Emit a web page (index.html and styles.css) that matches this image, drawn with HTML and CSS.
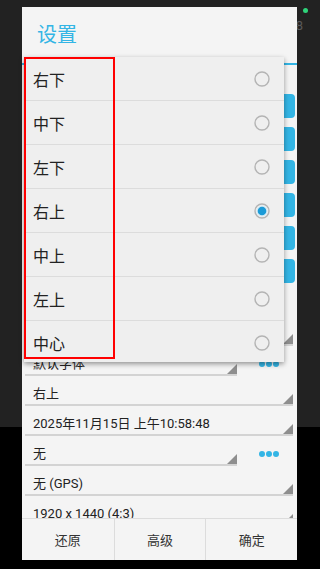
FILE: index.html
```html
<!DOCTYPE html>
<html lang="zh-CN">
<head>
    <meta charset="UTF-8">
    <meta name="viewport" content="width=device-width, initial-scale=1.0">
    <title>设置</title>
    <link rel="stylesheet" href="styles.css">
</head>
<body>
    <div class="backdrop">
        <span class="dot"></span>
        <span class="clock">10:58</span>
    </div>

    <div class="dialog">
        <h1 class="title">设置</h1>

        <div class="content">
            <div class="btn-row"><span>水印样式</span><button class="blue-btn">设置</button></div>
            <div class="btn-row"><span>文字颜色</span><button class="blue-btn">设置</button></div>
            <div class="btn-row"><span>背景颜色</span><button class="blue-btn">设置</button></div>
            <div class="btn-row"><span>文字大小</span><button class="blue-btn">设置</button></div>
            <div class="btn-row"><span>边距</span><button class="blue-btn">设置</button></div>
            <div class="btn-row"><span>透明度</span><button class="blue-btn">设置</button></div>
            <div class="label-row">字体</div>

            <div class="spinner-row">
                <div class="spinner">系统字体</div>
            </div>
            <div class="spinner-row">
                <div class="spinner narrow">默认字体</div>
                <div class="more"><i></i><i></i><i></i></div>
            </div>
            <div class="spinner-row">
                <div class="spinner">右上</div>
            </div>
            <div class="spinner-row">
                <div class="spinner">2025年11月15日 上午10:58:48</div>
            </div>
            <div class="spinner-row">
                <div class="spinner narrow">无</div>
                <div class="more"><i></i><i></i><i></i></div>
            </div>
            <div class="spinner-row">
                <div class="spinner">无 (GPS)</div>
            </div>
            <div class="spinner-row">
                <div class="spinner">1920 x 1440 (4:3)</div>
            </div>
        </div>

        <div class="actions">
            <button>还原</button>
            <button>高级</button>
            <button>确定</button>
        </div>

        <!-- dropdown list of the position spinner -->
        <ul class="popup">
            <li>右下 <svg class="radio" viewBox="0 0 16 16"><circle cx="8" cy="8" r="7" /></svg></li>
            <li>中下 <svg class="radio" viewBox="0 0 16 16"><circle cx="8" cy="8" r="7" /></svg></li>
            <li>左下 <svg class="radio" viewBox="0 0 16 16"><circle cx="8" cy="8" r="7" /></svg></li>
            <li>右上 <svg class="radio checked" viewBox="0 0 16 16"><circle cx="8" cy="8" r="7" /><circle class="halo" cx="8" cy="8" r="5.6" /><circle class="fill" cx="8" cy="8" r="4.3" /></svg></li>
            <li>中上 <svg class="radio" viewBox="0 0 16 16"><circle cx="8" cy="8" r="7" /></svg></li>
            <li>左上 <svg class="radio" viewBox="0 0 16 16"><circle cx="8" cy="8" r="7" /></svg></li>
            <li>中心 <svg class="radio" viewBox="0 0 16 16"><circle cx="8" cy="8" r="7" /></svg></li>
        </ul>

        <div class="mark"></div>
    </div>
</body>
</html>
```

FILE: styles.css
```css
* {
    box-sizing: border-box;
}
body {
    margin: 0;
    width: 320px;
    height: 569px;
    overflow: hidden;
    position: relative;
    background: #000;
    font-family: Roboto, "Noto Sans CJK SC", sans-serif;
}
.backdrop {
    height: 427px;
    background: #222;
    display: flex;
    flex-direction: column;
    align-items: flex-end;
    padding: 8px 12px 0 0;
}
.dot {
    width: 5px;
    height: 5px;
    border-radius: 50%;
    background: #2fd37a;
}
.clock {
    margin: 5px 5px 0 0;
    font-size: 13px;
    line-height: 15px;
    color: #5a5a5a;
}

.dialog {
    position: absolute;
    left: 22px;
    top: 7px;
    width: 275px;
    height: 553px;
    background: #f4f4f4;
    display: flex;
    flex-direction: column;
}
.title {
    margin: 0;
    height: 58px;
    padding-left: 15px;
    font-size: 20px;
    font-weight: normal;
    line-height: 56px;
    color: #33b5e5;
    border-bottom: 2px solid #33b5e5;
}
.content {
    flex: 1;
    overflow: hidden;
    padding: 24px 4px 0 3px;
    font-size: 13px;
    color: #222;
}
.btn-row {
    height: 33px;
    display: flex;
    align-items: center;
    justify-content: space-between;
    padding-left: 8px;
}
.blue-btn {
    width: 64px;
    height: 24px;
    margin-right: -2px;
    border: none;
    border-radius: 4px;
    background: #33b5e5;
    color: #fff;
    font-size: 12px;
}
.label-row {
    height: 29px;
    padding: 8px 0 0 8px;
}
.spinner-row {
    height: 30px;
    display: flex;
}
.spinner {
    position: relative;
    flex: 1;
    padding: 10px 0 2px 8px;
    line-height: 16px;
    border-bottom: 2px solid #d3d3d3;
    white-space: nowrap;
}
.spinner.narrow {
    flex: none;
    width: 212px;
}
.spinner::after {
    content: "";
    position: absolute;
    right: 0;
    bottom: 0;
    border-left: 10px solid transparent;
    border-bottom: 10px solid #8e8e8e;
}
.more {
    align-self: flex-end;
    margin: 0 0 9px 22px;
    display: flex;
    gap: 1px;
}
.more i {
    width: 6px;
    height: 6px;
    border-radius: 50%;
    background: #33b5e5;
}

.actions {
    height: 42px;
    display: grid;
    grid-template-columns: 1fr 1fr 1fr;
    border-top: 1px solid #dcdcdc;
}
.actions button {
    border: none;
    background: none;
    font-family: inherit;
    font-size: 13px;
    color: #333;
}
.actions button + button {
    border-left: 1px solid #dcdcdc;
}

.popup {
    position: absolute;
    left: 2px;
    top: 50px;
    width: 260px;
    height: 305px;
    margin: 0;
    padding: 0;
    list-style: none;
    overflow: hidden;
    background: #efefef;
    box-shadow: 0 2px 5px rgba(0, 0, 0, 0.4);
}
.popup li {
    height: 44px;
    display: flex;
    align-items: center;
    justify-content: space-between;
    padding: 0 14px 0 9px;
    border-bottom: 1px solid #dcdcdc;
    font-size: 16px;
    color: #222;
}
.radio {
    width: 16px;
    height: 16px;
}
.radio circle {
    fill: none;
    stroke: #b4b4b4;
    stroke-width: 1.4;
}
.radio .halo {
    fill: #d6ecf6;
    stroke: none;
}
.radio .fill {
    fill: #1c9bd7;
    stroke: none;
}

.mark {
    position: absolute;
    left: 2px;
    top: 50px;
    width: 91px;
    height: 302px;
    border: 2px solid #f00;
}
```
